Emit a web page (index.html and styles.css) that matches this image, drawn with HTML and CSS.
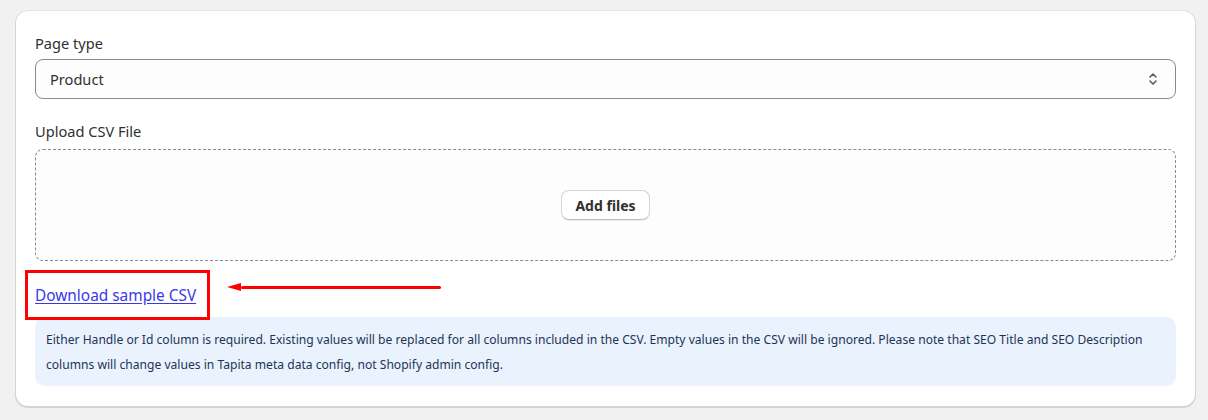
FILE: index.html
```html
<!DOCTYPE html>
<html lang="en">
<head>
<meta charset="utf-8">
<title>Import CSV</title>
<link rel="stylesheet" href="styles.css">
</head>
<body>
<div class="card">
  <div class="field">
    <label class="label">Page type</label>
    <div class="select">
      <span class="select-value">Product</span>
      <svg class="chevron" width="12" height="16" viewBox="0 0 12 16" fill="none" stroke="#5c5c5c" stroke-width="1.6" stroke-linecap="round" stroke-linejoin="round">
        <path d="M3 6 L6 3 L9 6"/>
        <path d="M3 10 L6 13 L9 10"/>
      </svg>
    </div>
  </div>
  <div class="field upload">
    <label class="label">Upload CSV File</label>
    <div class="dropzone">
      <button class="btn">Add files</button>
    </div>
  </div>
  <div class="link-row">
    <a class="link" href="#">Download sample CSV</a>
    <span class="highlight-box"></span>
    <span class="arrow"><span class="arrow-head"></span><span class="arrow-line"></span></span>
  </div>
  <div class="info">
    Either Handle or Id column is required. Existing values will be replaced for all columns included in the CSV. Empty values in the CSV will be ignored. Please note that SEO Title and SEO Description columns will change values in Tapita meta data config, not Shopify admin config.
  </div>
</div>
</body>
</html>
```
FILE: styles.css
```css
* { box-sizing: border-box; }
html, body { margin: 0; padding: 0; }
body {
  background: #f1f1f2;
  font-family: "Noto Sans", "Open Sans", sans-serif;
  color: #303030;
  width: 1208px;
  height: 420px;
  overflow: hidden;
}
.card {
  margin: 11px 13px 0 16px;
  background: #fff;
  border-radius: 12px;
  box-shadow: 0 1px 0 1px #d4d4d4, 0 0 0 1px #e3e3e3;
  padding: 22px 19px 20px 19px;
}
.field { display: flex; flex-direction: column; }
.label {
  font-size: 14.6px;
  line-height: 20px;
  color: #303030;
  margin-bottom: 6px;
}
.select {
  height: 40px;
  border: 1px solid #8a8a8a;
  border-radius: 8px;
  background: #fdfdfd;
  display: flex;
  align-items: center;
  justify-content: space-between;
  padding: 0 16px 0 14px;
}
.select-value { font-size: 14.6px; color: #303030; }
.chevron { display: block; }
.upload { margin-top: 22px; }
.upload .label { margin-bottom: 8px; }
.dropzone {
  height: 112px;
  border: 1px dashed #8a8a8a;
  border-radius: 8px;
  background: #fdfdfd;
  display: flex;
  align-items: center;
  justify-content: center;
}
.btn {
  font-family: inherit;
  font-size: 14px;
  font-weight: 700;
  color: #303030;
  background: #fff;
  border: 1px solid #d4d4d4;
  border-bottom-color: #bdbdbd;
  border-radius: 8px;
  height: 30px;
  padding: 0 13px;
  box-shadow: 0 1px 0 rgba(0,0,0,0.06);
}
.link-row {
  position: relative;
  height: 56px;
  display: flex;
  align-items: center;
}
.link {
  font-size: 15.4px;
  color: #3838e8;
  text-decoration: underline;
  text-underline-offset: 2px;
  margin-top: 12px;
}
.highlight-box {
  position: absolute;
  left: -10px;
  top: 9px;
  width: 185px;
  height: 50px;
  border: 3px solid #ff0000;
}
.arrow {
  position: absolute;
  left: 192px;
  top: 21px;
  width: 214px;
  height: 10px;
  display: flex;
  align-items: center;
}
.arrow-head {
  width: 0;
  height: 0;
  border-top: 4px solid transparent;
  border-bottom: 4px solid transparent;
  border-right: 14px solid #ff0000;
}
.arrow-line {
  flex: 1;
  height: 3px;
  background: #ff0000;
  border-radius: 2px;
}
.info {
  background: #eaf2fd;
  border-radius: 10px;
  padding: 10px 11px 9px 11px;
  font-size: 12.1px;
  line-height: 25px;
  color: #1d3456;
}
```
